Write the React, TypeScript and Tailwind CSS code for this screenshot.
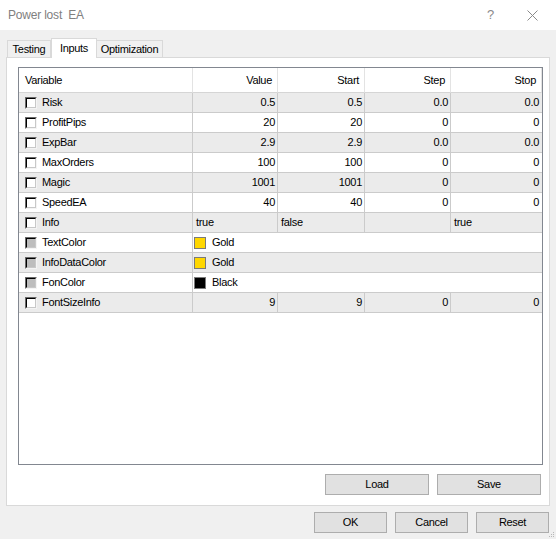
import React from "react";

type Row =
  | { kind: "num"; name: string; value: string; start: string; step: string; stop: string }
  | { kind: "bool"; name: string; value: string; start: string; step: string; stop: string }
  | { kind: "color"; name: string; color: string; label: string };

const rows: Row[] = [
  { kind: "num", name: "Risk", value: "0.5", start: "0.5", step: "0.0", stop: "0.0" },
  { kind: "num", name: "ProfitPips", value: "20", start: "20", step: "0", stop: "0" },
  { kind: "num", name: "ExpBar", value: "2.9", start: "2.9", step: "0.0", stop: "0.0" },
  { kind: "num", name: "MaxOrders", value: "100", start: "100", step: "0", stop: "0" },
  { kind: "num", name: "Magic", value: "1001", start: "1001", step: "0", stop: "0" },
  { kind: "num", name: "SpeedEA", value: "40", start: "40", step: "0", stop: "0" },
  { kind: "bool", name: "Info", value: "true", start: "false", step: "", stop: "true" },
  { kind: "color", name: "TextColor", color: "#ffd700", label: "Gold" },
  { kind: "color", name: "InfoDataColor", color: "#ffd700", label: "Gold" },
  { kind: "color", name: "FonColor", color: "#000000", label: "Black" },
  { kind: "num", name: "FontSizeInfo", value: "9", start: "9", step: "0", stop: "0" },
];

function CheckBox({ disabled }: { disabled?: boolean }) {
  return (
    <div className="w-[12px] h-[12px] border border-t-[#696969] border-l-[#696969] border-b-[#f4f4f4] border-r-[#f4f4f4] shrink-0">
      <div
        className={
          "w-full h-full border border-t-black border-l-black border-b-[#c8c8c8] border-r-[#c8c8c8] " +
          (disabled ? "bg-[#bdbdbd]" : "bg-white")
        }
      />
    </div>
  );
}

function Btn({ label, w }: { label: string; w: string }) {
  return (
    <div className={`${w} h-[21px] bg-[#e1e1e1] border border-[#adadad] flex items-center justify-center`}>
      {label}
    </div>
  );
}

export default function App() {
  const line = "border-b border-[#cbcbcb]";
  return (
    <div className="w-[556px] h-[539px] bg-[#f0f0f0] flex flex-col overflow-hidden relative text-[11px] tracking-[-0.3px] text-black font-['Liberation_Sans',Arial,sans-serif]">
      {/* title bar */}
      <div className="h-[30px] bg-white flex items-center pl-[8px] shrink-0">
        <span className="text-[12px] tracking-[-0.2px] text-[#808080]">Power lost&nbsp; EA</span>
        <span className="ml-auto text-[13px] text-[#8a8a8a] mr-[33px]">?</span>
        <svg width="11" height="11" viewBox="0 0 11 11" className="mr-[18px]">
          <path d="M0.5 0.5 L10.5 10.5 M10.5 0.5 L0.5 10.5" stroke="#8a8a8a" strokeWidth="1" />
        </svg>
      </div>

      <div className="px-[6px] pt-[8px]">
        {/* tabs */}
        <div className="h-[19px] flex items-end pl-[1px] relative z-10">
          <div className="w-[44px] h-[17px] border border-b-0 border-[#d9d9d9] bg-[#f0f0f0] flex items-center justify-center pt-[1px]">
            Testing
          </div>
          <div className="w-[46px] h-[20px] -mb-[1px] border border-b-0 border-[#d9d9d9] bg-white flex items-start justify-center pt-[1px]">
            Inputs
          </div>
          <div className="w-[66px] h-[17px] border border-b-0 border-l-0 border-[#d9d9d9] bg-[#f0f0f0] flex items-center justify-center pt-[1px]">
            Optimization
          </div>
        </div>

        {/* panel */}
        <div className="h-[449px] border border-[#d9d9d9] bg-white pl-[11px] pr-[8px] pt-[9px]">
          <div className="w-[525px] h-[398px] border border-[#828790] bg-white">
            <div className="grid grid-cols-[174px_85px_87px_86px_91px]">
              {/* header */}
              <div className="h-[25px] border-b border-r border-[#e3e3e3] border-b-[#d5d5d5] flex items-center pl-[6px]">Variable</div>
              <div className="h-[25px] border-b border-r border-[#e3e3e3] border-b-[#d5d5d5] flex items-center justify-end pr-[5px]">Value</div>
              <div className="h-[25px] border-b border-r border-[#e3e3e3] border-b-[#d5d5d5] flex items-center justify-end pr-[5px]">Start</div>
              <div className="h-[25px] border-b border-r border-[#e3e3e3] border-b-[#d5d5d5] flex items-center justify-end pr-[5px]">Step</div>
              <div className="h-[25px] border-b border-r border-[#e3e3e3] border-b-[#d5d5d5] flex items-center justify-end pr-[5px]">Stop</div>

              {rows.map((r, i) => {
                const bg = i % 2 === 0 ? "bg-[#ebebeb]" : "bg-white";
                const cell = `h-[20px] ${line} ${bg} flex items-center`;
                const name = (
                  <div key={r.name + "n"} className={`${cell} border-r border-r-[#cbcbcb] pl-[6px] gap-[5px]`}>
                    <CheckBox disabled={r.kind === "color"} />
                    <span>{r.name}</span>
                  </div>
                );
                if (r.kind === "color") {
                  return (
                    <React.Fragment key={r.name}>
                      {name}
                      <div className={`${cell} col-span-4 pl-[1px] gap-[6px]`}>
                        <div className="w-[12px] h-[12px] border border-[#7a7a7a]" style={{ backgroundColor: r.color }} />
                        <span>{r.label}</span>
                      </div>
                    </React.Fragment>
                  );
                }
                const align = r.kind === "num" ? "justify-end pr-[2px]" : "justify-start pl-[3px]";
                const lastAlign = r.kind === "num" ? "justify-end pr-[3px]" : "justify-start pl-[3px]";
                return (
                  <React.Fragment key={r.name}>
                    {name}
                    <div className={`${cell} border-r border-r-[#cbcbcb] ${align}`}>{r.value}</div>
                    <div className={`${cell} border-r border-r-[#cbcbcb] ${align}`}>{r.start}</div>
                    <div className={`${cell} border-r border-r-[#cbcbcb] ${align}`}>{r.step}</div>
                    <div className={`${cell} ${lastAlign}`}>{r.stop}</div>
                  </React.Fragment>
                );
              })}
            </div>
          </div>

          <div className="flex justify-end gap-[8px] mt-[9px]">
            <Btn label="Load" w="w-[104px]" />
            <Btn label="Save" w="w-[104px]" />
          </div>
        </div>
      </div>

      {/* dialog buttons */}
      <div className="flex justify-end gap-[8px] mt-[6px] pr-[7px]">
        <Btn label="OK" w="w-[73px]" />
        <Btn label="Cancel" w="w-[73px]" />
        <Btn label="Reset" w="w-[73px]" />
      </div>

      {/* size grip */}
      <svg width="6" height="6" viewBox="0 0 6 6" className="absolute right-[1px] bottom-[1px]">
        <rect x="4" y="0" width="1" height="1" fill="#b8b8b8" />
        <rect x="2" y="2" width="1" height="1" fill="#b8b8b8" />
        <rect x="4" y="2" width="1" height="1" fill="#b8b8b8" />
        <rect x="0" y="4" width="1" height="1" fill="#b8b8b8" />
        <rect x="2" y="4" width="1" height="1" fill="#b8b8b8" />
        <rect x="4" y="4" width="1" height="1" fill="#b8b8b8" />
      </svg>
    </div>
  );
}
